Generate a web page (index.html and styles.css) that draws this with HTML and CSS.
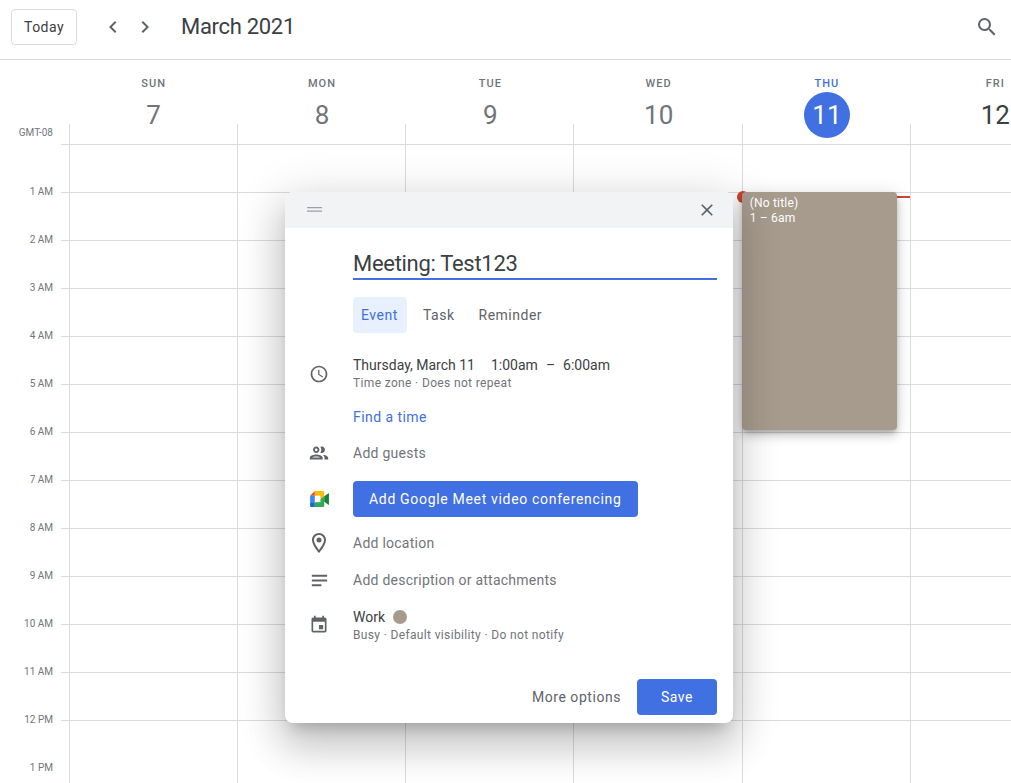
FILE: index.html
```html
<!DOCTYPE html>
<html lang="en">
<head>
<meta charset="utf-8">
<title>Calendar</title>
<link rel="stylesheet" href="styles.css">
</head>
<body>
<div class="app">
  <header class="topbar">
    <button class="today">Today</button>
    <div class="nav">
      <svg class="nav-icon" viewBox="0 0 24 24"><path d="M15.41 7.41 14 6l-6 6 6 6 1.41-1.41L10.83 12z"/></svg>
      <svg class="nav-icon" viewBox="0 0 24 24"><path d="M8.59 16.59 10 18l6-6-6-6-1.41 1.41L13.17 12z"/></svg>
    </div>
    <h1 class="month">March 2021</h1>
    <svg class="search" viewBox="0 0 24 24"><path d="M15.5 14h-.79l-.28-.27A6.47 6.47 0 0 0 16 9.5 6.5 6.5 0 1 0 9.5 16c1.61 0 3.09-.59 4.23-1.57l.27.28v.79l5 4.99L20.49 19l-4.99-5zm-6 0C7.01 14 5 11.99 5 9.5S7.01 5 9.5 5 14 7.01 14 9.5 11.99 14 9.5 14z"/></svg>
  </header>

  <div class="dayhead">
    <div class="day"><span class="dow">SUN</span><span class="num">7</span></div>
    <div class="day"><span class="dow">MON</span><span class="num">8</span></div>
    <div class="day"><span class="dow">TUE</span><span class="num">9</span></div>
    <div class="day"><span class="dow">WED</span><span class="num">10</span></div>
    <div class="day today-col"><span class="dow">THU</span><span class="num">11</span></div>
    <div class="day future"><span class="dow">FRI</span><span class="num">12</span></div>
  </div>

  <div class="week">
    <div class="gutter">
      <div class="tz">GMT-08</div>
      <div class="hour">1 AM</div>
      <div class="hour">2 AM</div>
      <div class="hour">3 AM</div>
      <div class="hour">4 AM</div>
      <div class="hour">5 AM</div>
      <div class="hour">6 AM</div>
      <div class="hour">7 AM</div>
      <div class="hour">8 AM</div>
      <div class="hour">9 AM</div>
      <div class="hour">10 AM</div>
      <div class="hour">11 AM</div>
      <div class="hour">12 PM</div>
      <div class="hour">1 PM</div>
    </div>
    <div class="ticks"></div>
    <div class="col"></div>
    <div class="col"></div>
    <div class="col"></div>
    <div class="col"></div>
    <div class="col col-today">
      <div class="now-line"></div>
      <div class="now-dot"></div>
      <div class="event">
        <div class="event-title">(No title)</div>
        <div>1 – 6am</div>
      </div>
    </div>
    <div class="col"></div>
  </div>

  <section class="popup">
    <div class="popup-head">
      <svg class="drag" viewBox="0 0 15 5"><path d="M0 0h15v1.200H0zM0 3.600h15v1.200H0z"/></svg>
      <svg class="close" viewBox="0 0 24 24"><path d="M19 6.410 17.590 5 12 10.590 6.410 5 5 6.410 10.590 12 5 17.590 6.410 19 12 13.410 17.590 19 19 17.590 13.410 12z"/></svg>
    </div>
    <div class="popup-body">
      <div class="title">Meeting: Test123</div>
      <div class="tabs">
        <span class="tab tab-on">Event</span>
        <span class="tab">Task</span>
        <span class="tab">Reminder</span>
      </div>

      <div class="row row-time">
        <svg class="ico" viewBox="0 0 24 24"><path d="M11.990 2C6.470 2 2 6.480 2 12s4.470 10 9.990 10C17.520 22 22 17.520 22 12S17.520 2 11.990 2zM12 20c-4.420 0-8-3.580-8-8s3.580-8 8-8 8 3.580 8 8-3.580 8-8 8zm.5-13H11v6l5.250 3.150.75-1.230-4.500-2.670z"/></svg>
        <div>
          <div class="main times"><span>Thursday, March 11</span><span>1:00am</span><span>–</span><span>6:00am</span></div>
          <div class="sub">Time zone · Does not repeat</div>
        </div>
      </div>
      <div class="row row-find"><span class="link">Find a time</span></div>
      <div class="row row-guests">
        <svg class="ico ico-guests" viewBox="0 0 24 24"><path d="M9 13.750c-2.340 0-7 1.170-7 3.500V19h14v-1.750c0-2.330-4.660-3.500-7-3.500zM4.340 17c.84-.58 2.870-1.250 4.660-1.250s3.820.67 4.660 1.250H4.340zM9 12c1.930 0 3.500-1.570 3.500-3.500S10.930 5 9 5 5.500 6.570 5.500 8.500 7.070 12 9 12zm0-5c.83 0 1.500.67 1.500 1.500S9.830 10 9 10s-1.500-.67-1.500-1.500S8.170 7 9 7zm7.040 6.810c1.160.84 1.960 1.960 1.960 3.440V19h4v-1.750c0-2.020-3.500-3.170-5.960-3.440zM15 12c1.930 0 3.500-1.570 3.500-3.500S16.930 5 15 5c-.54 0-1.040.13-1.500.35.63.89 1 1.980 1 3.150s-.37 2.260-1 3.150c.46.22.96.35 1.500.35z"/></svg>
        <span class="hint">Add guests</span>
      </div>
      <div class="row row-meet">
        <svg class="ico meet" viewBox="0 0 20 17">
          <path fill="#ea4335" d="M5 0 0 5h5z"/>
          <path fill="#4285f4" d="M0 5h5v7H0z"/>
          <path fill="#1967d2" d="M0 12h5v5H1.300C.6 17 0 16.400 0 15.700z"/>
          <path fill="#fbbc04" d="M5 0h8.700c.7 0 1.300.6 1.300 1.300v4.200l-4 3V5H5z"/>
          <path fill="#34a853" d="M5 12h6V8.500l4-3v10.200c0 .7-.6 1.300-1.300 1.300H5z"/>
          <path fill="#188038" d="M15 5.500 20 2v13l-5-3.500z"/>
        </svg>
        <span class="btn-meet">Add Google Meet video conferencing</span>
      </div>
      <div class="row row-loc">
        <svg class="ico ico-loc" viewBox="0 0 24 24"><path d="M12 2C8.130 2 5 5.130 5 9c0 5.250 7 13 7 13s7-7.750 7-13c0-3.870-3.130-7-7-7zM7 9c0-2.760 2.240-5 5-5s5 2.240 5 5c0 2.880-2.880 7.190-5 9.880C9.920 16.210 7 11.850 7 9z"/><circle cx="12" cy="9" r="2.500"/></svg>
        <span class="hint">Add location</span>
      </div>
      <div class="row row-desc">
        <svg class="ico ico-desc" viewBox="0 0 24 24"><path d="M4 18h10v-2H4v2zM20 6H4v2h16V6zM4 13h16v-2H4v2z"/></svg>
        <span class="hint">Add description or attachments</span>
      </div>
      <div class="row row-cal">
        <svg class="ico ico-cal" viewBox="0 0 24 24"><path d="M17 12h-5v5h5v-5zM16 1v2H8V1H6v2H5c-1.110 0-1.990.9-1.990 2L3 19c0 1.100.89 2 2 2h14c1.100 0 2-.9 2-2V5c0-1.100-.9-2-2-2h-1V1h-2zm3 18H5V8h14v11z"/></svg>
        <div>
          <div class="main work"><span>Work</span><i class="swatch"></i></div>
          <div class="sub">Busy · Default visibility · Do not notify</div>
        </div>
      </div>
      <div class="actions">
        <span class="more">More options</span>
        <span class="save">Save</span>
      </div>
    </div>
  </section>
</div>
</body>
</html>
```
FILE: styles.css
```css
* { box-sizing: border-box; }
html, body { margin: 0; height: 100%; }
body { font-family: "Roboto", "Liberation Sans", sans-serif; color: #3c4043; background: #fff; overflow: hidden; }
.app { position: relative; width: 1011px; height: 783px; overflow: hidden; display: flex; flex-direction: column; }

.topbar { height: 60px; flex: none; display: flex; align-items: center; padding: 0 12px 5px 11px; border-bottom: 1px solid #dadce0; }
.today { width: 66px; height: 36px; background: #fff; border: 1px solid #dadce0; border-radius: 4px; font: 450 14px "Roboto", sans-serif; letter-spacing: .45px; color: #3c4043; padding: 0; }
.nav { display: flex; gap: 8px; margin-left: 24px; }
.nav-icon { width: 24px; height: 24px; fill: #5f6368; }
.month { margin: 0 0 0 24px; font-weight: 400; font-size: 22px; line-height: 28px; letter-spacing: -.3px; color: #3c4043; }
.search { width: 24px; height: 24px; fill: #5f6368; margin-left: auto; }

.dayhead { height: 64px; flex: none; display: grid; grid-template-columns: repeat(6, 168.33px); padding-left: 69.5px; }
.day { display: flex; flex-direction: column; align-items: center; padding-top: 17px; color: #70757a; }
.dow { font-size: 11px; line-height: 13px; font-weight: 500; letter-spacing: 1px; }
.num { width: 46px; height: 46px; margin-top: 2px; border-radius: 50%; display: flex; align-items: center; justify-content: center; font-size: 26px; font-weight: 400; color: #70757a; }
.today-col .dow { color: #4170e2; }
.today-col .num { background: #4170e2; color: #fff; }
.future .num { color: #3c4043; }

.week { flex: 1; display: flex; min-height: 0; }
.gutter { width: 61px; flex: none; font-size: 10px; color: #70757a; text-align: right; padding-right: 8px; }
.tz { height: 19px; line-height: 18px; }
.hour { height: 48px; padding-top: 43px; line-height: 12px; white-space: nowrap; }
.ticks { width: 8px; flex: none; }
.ticks, .col { background-image: repeating-linear-gradient(to bottom, transparent 0, transparent 47px, #dadce0 47px, #dadce0 48px); background-position: 0 -27px; }
.col { width: 168.16px; flex: none; border-left: 1px solid #dadce0; }
.col-today { position: relative; }
.event { position: absolute; left: -1px; top: 68px; width: 155px; height: 238px; background: #a79b8e; border-radius: 4px; color: #fff; font-size: 12px; line-height: 15px; letter-spacing: .2px; padding: 4px 8px; box-shadow: 0 6px 10px 0 rgba(0,0,0,.14), 0 1px 18px 0 rgba(0,0,0,.12), 0 3px 5px -1px rgba(0,0,0,.2); }
.event-title { font-weight: 450; }
.now-line { position: absolute; left: 0; right: 0; top: 72px; height: 2px; background: #d2452f; }
.now-dot { position: absolute; left: -6px; top: 67px; width: 12px; height: 12px; border-radius: 50%; background: #d2452f; }

.popup { position: absolute; left: 285px; top: 192px; width: 448px; height: 531px; background: #fff; border-radius: 8px; box-shadow: 0 24px 38px 3px rgba(0,0,0,.14), 0 9px 46px 8px rgba(0,0,0,.12), 0 11px 15px -7px rgba(0,0,0,.2); display: flex; flex-direction: column; }
.popup-head { height: 36px; flex: none; background: #f1f3f4; border-radius: 8px 8px 0 0; display: flex; align-items: center; justify-content: space-between; padding: 0 16px 0 22px; }
.drag { width: 15px; height: 5px; fill: #9aa0a6; margin-bottom: 2px; }
.close { width: 20px; height: 20px; fill: #5f6368; }
.popup-body { padding: 20px 16px 8px 68px; flex: 1; display: flex; flex-direction: column; }
.title { height: 32px; font-size: 22px; line-height: 31px; letter-spacing: -.3px; border-bottom: 2px solid #4170e2; color: #3c4043; }
.tabs { display: flex; margin-top: 17px; gap: 8px; font-size: 14px; font-weight: 450; color: #5f6368; letter-spacing: .5px; }
.tab { height: 36px; line-height: 36px; padding: 0 8px; border-radius: 4px; }
.tab-on { background: #e8f0fe; color: #4170e2; width: 54px; }
.row { position: relative; display: flex; align-items: center; min-height: 20px; }
.ico { position: absolute; left: -44px; top: 50%; width: 20px; height: 20px; margin-top: -10px; fill: #5f6368; }
.ico-guests { width: 22px; height: 22px; left: -45px; margin-top: -11px; }
.ico-loc { width: 24px; height: 24px; left: -46px; margin-top: -12px; }
.ico-desc { width: 23px; height: 23px; left: -45.5px; margin-top: -11.5px; }
.ico-cal { margin-top: -11px; }
.main { font-size: 14px; line-height: 18px; color: #3c4043; }
.sub { font-size: 12px; line-height: 18px; color: #70757a; letter-spacing: .35px; }
.times { display: flex; gap: 8px; }
.times span:first-child { margin-right: 8px; }
.row-time { margin-top: 23px; }
.row-find { margin-top: 15px; }
.link { font-size: 14px; font-weight: 450; color: #4170e2; letter-spacing: .45px; }
.hint { font-size: 14px; color: #70757a; letter-spacing: .25px; }
.row-guests { margin-top: 16px; }
.row-meet { margin-top: 18px; }
.btn-meet { height: 36px; width: 285px; padding: 0 16px; line-height: 36px; border-radius: 4px; background: #4170e2; color: #fff; font-size: 14px; font-weight: 450; letter-spacing: .68px; white-space: nowrap; }
.ico.meet { width: 19px; height: 16px; margin-top: -8px; left: -43px; }
.row-loc { margin-top: 16px; }
.row-desc { margin-top: 17px; }
.row-cal { margin-top: 18px; }
.work { display: flex; align-items: center; gap: 8px; }
.swatch { width: 14px; height: 14px; border-radius: 50%; background: #a79b8e; display: block; }
.actions { margin-top: auto; display: flex; justify-content: flex-end; align-items: center; gap: 16px; }
.more { font-size: 14px; font-weight: 450; color: #5f6368; letter-spacing: .55px; }
.save { width: 80px; height: 36px; line-height: 36px; text-align: center; border-radius: 4px; background: #4170e2; color: #fff; font-size: 14px; font-weight: 450; letter-spacing: .5px; }
```
